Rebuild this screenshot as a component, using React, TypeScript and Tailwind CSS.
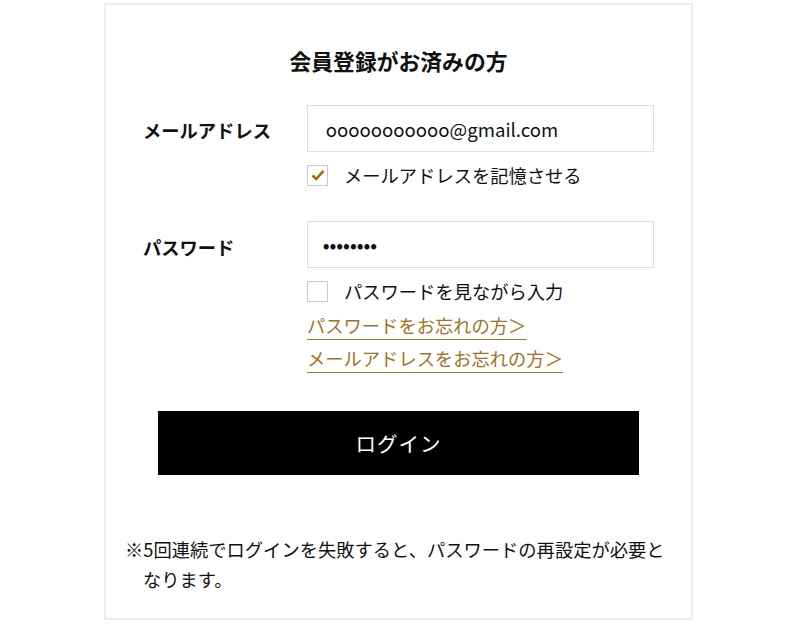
import React, { useState } from 'react';

export default function App() {
  const [remember, setRemember] = useState(true);
  const [showPw, setShowPw] = useState(false);

  return (
    <div className="w-[800px] h-[626px] bg-white pt-[3px] text-[#111]" style={{ fontFamily: "'Noto Sans CJK JP', 'Noto Sans', sans-serif" }}>
      <div className="ml-[104px] w-[589px] h-[617px] border-2 border-[#ececec] bg-white">
        {/* TITLE */}
        <h2 className="pt-[40px] text-center text-[21.8px] font-bold leading-[32px]">会員登録がお済みの方</h2>

        <div className="px-[37px] pt-[28px]">
          {/* EMAIL */}
          <div className="flex items-center">
            <label className="w-[164px] text-[18.3px] font-bold pt-[5px]">メールアドレス</label>
            <div className="w-[348px] h-[47px] border border-[#dedede] flex items-center pl-[18px] text-[18.6px]">
              ooooooooooo@gmail.com
            </div>
          </div>
          <div className="ml-[164px] mt-[10px] flex items-center gap-[16px] text-[18.3px] cursor-pointer" onClick={() => setRemember(!remember)}>
            <span className="w-[21px] h-[21px] border border-[#c8c8c8] flex items-center justify-center">
              {remember && (
                <svg width="14" height="12" viewBox="0 0 14 12">
                  <path d="M1.5 6.5 L5.2 10 L12.5 1.8" stroke="#a56a06" strokeWidth="2.6" fill="none" />
                </svg>
              )}
            </span>
            <span className="leading-[26px]">メールアドレスを記憶させる</span>
          </div>

          {/* PASSWORD */}
          <div className="flex items-center mt-[33px]">
            <label className="w-[164px] text-[18.3px] font-bold pt-[6px]">パスワード</label>
            <div className="w-[348px] h-[47px] border border-[#dedede] flex items-center pl-[15px] text-[18px] font-bold">
              ••••••••
            </div>
          </div>
          <div className="ml-[164px] mt-[10px] flex items-center gap-[16px] text-[18.3px] cursor-pointer" onClick={() => setShowPw(!showPw)}>
            <span className="w-[21px] h-[21px] border border-[#c8c8c8] flex items-center justify-center">
              {showPw && (
                <svg width="14" height="12" viewBox="0 0 14 12">
                  <path d="M1.5 6.5 L5.2 10 L12.5 1.8" stroke="#a56a06" strokeWidth="2.6" fill="none" />
                </svg>
              )}
            </span>
            <span className="leading-[26px]">パスワードを見ながら入力</span>
          </div>
          <div className="ml-[164px] mt-[5px] flex flex-col items-start text-[18.3px] text-[#a47224] leading-[33px]">
            <a href="#" className="underline underline-offset-[6px] decoration-[1px]">パスワードをお忘れの方＞</a>
            <a href="#" className="underline underline-offset-[6px] decoration-[1px]">メールアドレスをお忘れの方＞</a>
          </div>
        </div>

        {/* BUTTON */}
        <button className="block mx-auto mt-[36px] w-[481px] h-[64px] bg-black text-white text-[20.5px] tracking-[1px]">
          ログイン
        </button>

        {/* NOTE */}
        <p className="mt-[59px] pl-[37px] pr-[16px] text-[18.3px] leading-[30px] -indent-[18px]">
          ※5回連続でログインを失敗すると、パスワードの再設定が必要となります。
        </p>
      </div>
    </div>
  );
}
